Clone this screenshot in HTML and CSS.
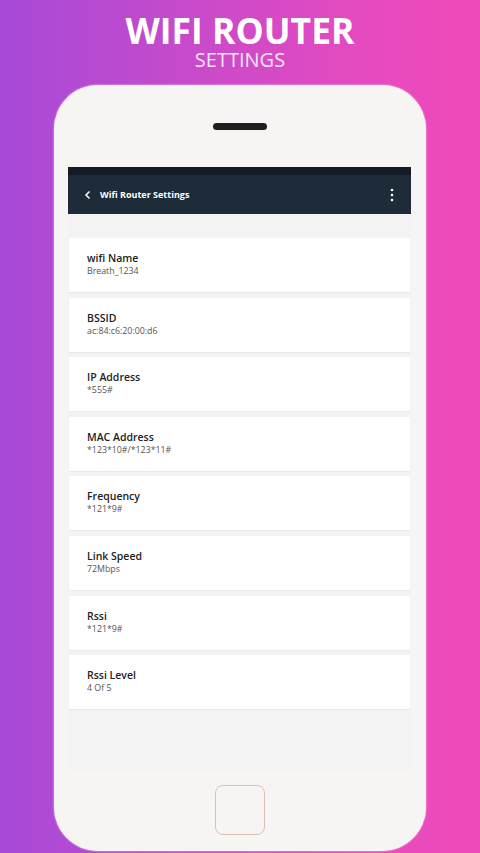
FILE: index.html
```html
<!DOCTYPE html>
<html>
<head>
<meta charset="utf-8">
<link rel="stylesheet" href="styles.css">
</head>
<body>
<div class="page">
  <header class="hero">
    <h1 class="hero-title">WIFI ROUTER</h1>
    <p class="hero-sub">SETTINGS</p>
  </header>
  <div class="phone">
    <div class="speaker"></div>
    <div class="screen">
      <div class="status"></div>
      <div class="appbar">
        <svg class="back" width="8" height="10" viewBox="0 0 8 10"><path d="M5.5 1.5 L2 5 L5.5 8.5" fill="none" stroke="#fff" stroke-width="1.5"/></svg>
        <span class="appbar-title">Wifi Router Settings</span>
        <svg class="kebab" width="4" height="14" viewBox="0 0 4 14"><circle cx="2" cy="2" r="1.3" fill="#fff"/><circle cx="2" cy="7" r="1.3" fill="#fff"/><circle cx="2" cy="12" r="1.3" fill="#fff"/></svg>
      </div>
      <div class="list">
        <div class="card"><div class="label">wifi Name</div><div class="value">Breath_1234</div></div>
        <div class="card"><div class="label">BSSID</div><div class="value">ac:84:c6:20:00:d6</div></div>
        <div class="card"><div class="label">IP Address</div><div class="value">*555#</div></div>
        <div class="card"><div class="label">MAC Address</div><div class="value">*123*10#/*123*11#</div></div>
        <div class="card"><div class="label">Frequency</div><div class="value">*121*9#</div></div>
        <div class="card"><div class="label">Link Speed</div><div class="value">72Mbps</div></div>
        <div class="card"><div class="label">Rssi</div><div class="value">*121*9#</div></div>
        <div class="card"><div class="label">Rssi Level</div><div class="value">4 Of 5</div></div>
      </div>
    </div>
    <div class="home"></div>
  </div>
</div>
</body>
</html>
```
FILE: styles.css
```css
html, body {
  margin: 0;
  padding: 0;
}
body {
  width: 480px;
  height: 853px;
  overflow: hidden;
  font-family: "Open Sans", "Noto Sans", sans-serif;
  background: linear-gradient(90deg, #a64ad8 0%, #c84acb 40%, #e54ac0 75%, #f04ab9 100%);
}
.page {
  display: flex;
  flex-direction: column;
  align-items: center;
  height: 853px;
}
.hero {
  text-align: center;
  color: #fff;
  padding-top: 13px;
}
.hero-title {
  margin: 0;
  font-size: 35.5px;
  font-weight: 700;
  line-height: 34px;
}
.hero-sub {
  margin: 3px 0 0 0;
  font-size: 20px;
  font-weight: 400;
  line-height: 20px;
  color: #f6e4f6;
}
.phone {
  margin-top: 15px;
  width: 372px;
  height: 766px;
  box-sizing: border-box;
  background: #f7f4f4;
  border-radius: 44px;
  box-shadow: 0 0 2px rgba(255,255,255,0.8);
  display: flex;
  flex-direction: column;
  align-items: center;
  padding-top: 38px;
}
.speaker {
  width: 54px;
  height: 7px;
  border-radius: 4px;
  background: #1f1f22;
}
.screen {
  margin-top: 37px;
  width: 343px;
  height: 603px;
  margin-left: -1px;
  background: #f3f3f3;
  display: flex;
  flex-direction: column;
}
.status {
  height: 8px;
  background: #121b24;
}
.appbar {
  height: 39px;
  background: #1e2b39;
  display: flex;
  align-items: center;
  padding: 0 17px 0 16px;
}
.back {
  margin-right: 8px;
}
.appbar-title {
  color: #fff;
  font-size: 9px;
  font-weight: 700;
  flex: 1;
}
.list {
  display: flex;
  flex-direction: column;
  gap: 5.6px;
  padding-top: 24px;
}
.card {
  background: #fff;
  height: 54px;
  margin: 0 1px;
  box-sizing: border-box;
  padding: 13px 0 0 18px;
  box-shadow: 0 1px 1px rgba(0,0,0,0.04);
}
.label {
  font-size: 10.5px;
  font-weight: 600;
  color: #222;
  line-height: 14px;
}
.value {
  font-size: 8.8px;
  color: #555;
  line-height: 13px;
}
.home {
  margin-top: 15px;
  width: 48px;
  height: 48px;
  border: 1.5px solid #e3bdb5;
  border-radius: 8px;
}
```
